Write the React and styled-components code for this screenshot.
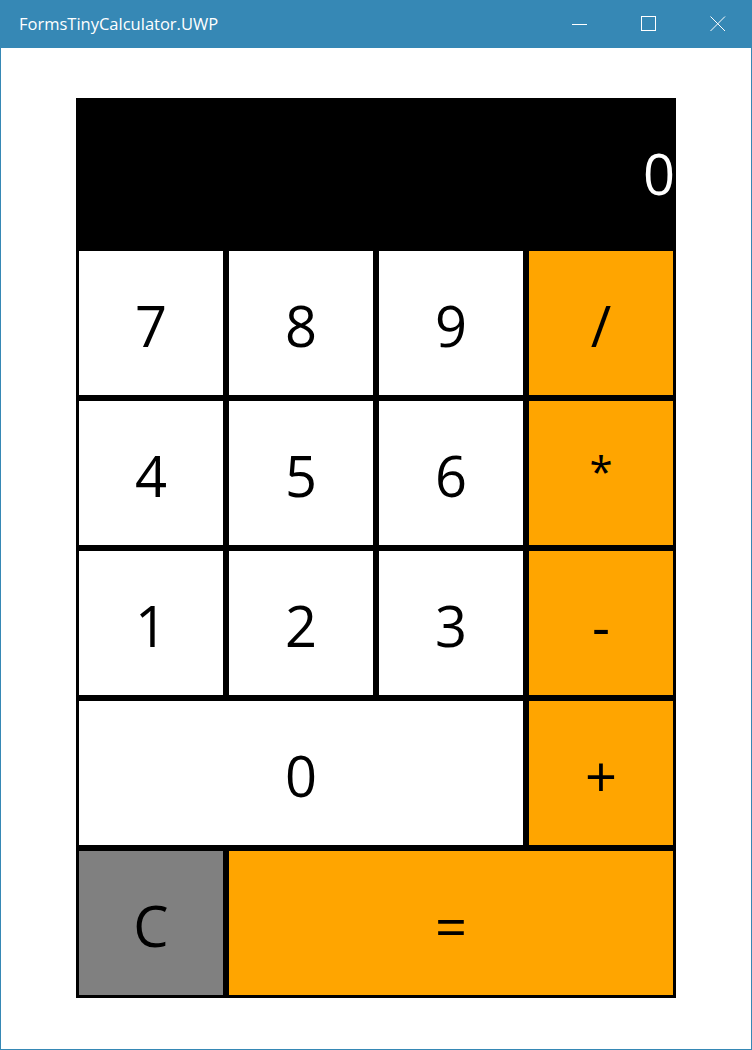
import React from 'react';
import styled, { createGlobalStyle } from 'styled-components';

const GlobalStyle = createGlobalStyle`
  html, body {
    margin: 0;
    padding: 0;
    background: #ffffff;
  }
  * {
    box-sizing: border-box;
  }
`

const Window = styled.div`
  width: 752px;
  height: 1050px;
  border: 1px solid #3688b5;
  border-top: none;
  display: flex;
  flex-direction: column;
  font-family: "Open Sans", "Noto Sans", sans-serif;
`

const TitleBar = styled.div`
  height: 48px;
  margin: 0 -1px;
  background: #3688b5;
  display: flex;
  align-items: center;
  justify-content: space-between;
  color: #ffffff;
`

const Title = styled.div`
  padding-left: 19px;
  padding-bottom: 1px;
  font-size: 16.5px;
`

const Controls = styled.div`
  display: flex;
  height: 100%;
`

const ControlButton = styled.div`
  width: 69px;
  height: 100%;
  display: flex;
  align-items: center;
  justify-content: center;
`

const Content = styled.div`
  flex: 1;
  display: flex;
  justify-content: center;
  padding-top: 50px;
`

const Calculator = styled.div`
  width: 600px;
  height: 900px;
  background: #000000;
  padding: 3px;
  display: grid;
  grid-template-columns: repeat(4, 144px);
  grid-template-rows: repeat(6, 144px);
  gap: 6px;
`

const Display = styled.div`
  grid-column: span 4;
  display: flex;
  align-items: center;
  justify-content: flex-end;
  color: #ffffff;
  font-size: 56px;
  line-height: 1;
  padding-right: 0px;
  margin-right: -2px;
`

const Key = styled.div`
  grid-column: span ${props => props.span || 1};
  background: ${props => props.color || '#ffffff'};
  display: flex;
  align-items: center;
  justify-content: center;
  color: #000000;
  font-size: 56px;
  line-height: 1;
  padding-top: 3px;
`

const Glyph = styled.span`
  font-size: ${props => props.size || 56}px;
  position: relative;
  top: ${props => props.shift || 0}px;
`

const ORANGE = '#ffa500'
const GRAY = '#808080'

const keys = [
  { label: '7' }, { label: '8' }, { label: '9' }, { label: '/', color: ORANGE },
  { label: '4' }, { label: '5' }, { label: '6' }, { label: '*', color: ORANGE, size: 42, shift: -4 },
  { label: '1' }, { label: '2' }, { label: '3' }, { label: '-', color: ORANGE },
  { label: '0', span: 3 }, { label: '+', color: ORANGE },
  { label: 'C', color: GRAY }, { label: '=', color: ORANGE, span: 3 },
]

export default function App() {
  return (
    <>
      <GlobalStyle />
      <Window>
        <TitleBar>
          <Title>FormsTinyCalculator.UWP</Title>
          <Controls>
            <ControlButton>
              <svg width="16" height="16" viewBox="0 0 16 16">
                <line x1="0" y1="8.5" x2="15" y2="8.5" stroke="#fff" strokeWidth="1" />
              </svg>
            </ControlButton>
            <ControlButton>
              <svg width="16" height="16" viewBox="0 0 16 16">
                <rect x="0.5" y="0.5" width="14" height="14" fill="none" stroke="#fff" strokeWidth="1" />
              </svg>
            </ControlButton>
            <ControlButton>
              <svg width="16" height="16" viewBox="0 0 16 16">
                <path d="M0.5 0.5 L15 15 M15 0.5 L0.5 15" stroke="#fff" strokeWidth="1" />
              </svg>
            </ControlButton>
          </Controls>
        </TitleBar>
        <Content>
          <Calculator>
            <Display>0</Display>
            {keys.map((k, i) => (
              <Key key={i} color={k.color} span={k.span}>
                <Glyph size={k.size} shift={k.shift}>{k.label}</Glyph>
              </Key>
            ))}
          </Calculator>
        </Content>
      </Window>
    </>
  );
}
